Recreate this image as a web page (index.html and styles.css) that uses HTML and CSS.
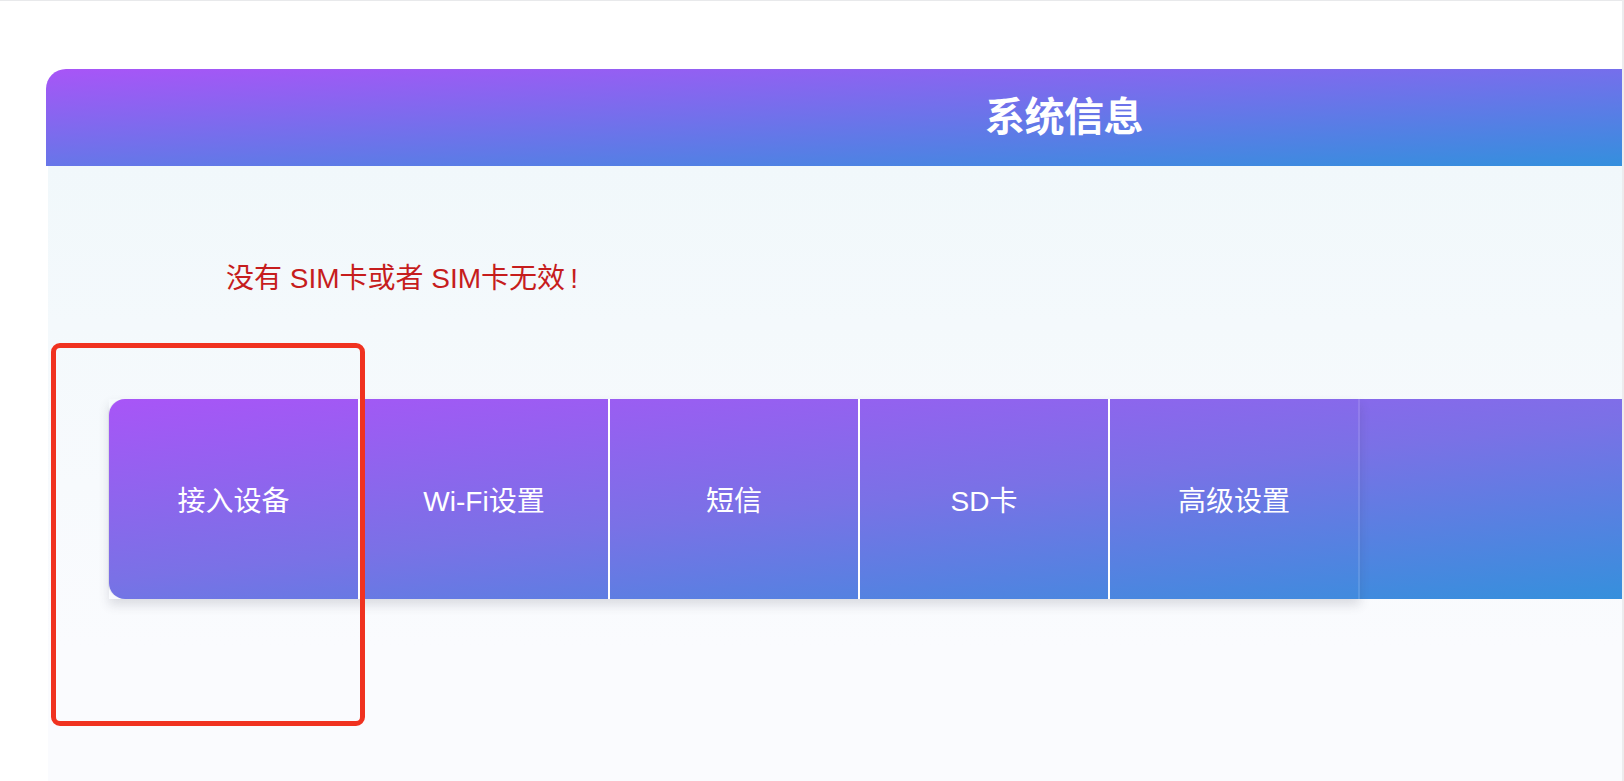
FILE: index.html
```html
<!DOCTYPE html>
<html lang="zh-CN">
<head>
<meta charset="utf-8">
<title>系统信息</title>
<link rel="stylesheet" href="styles.css">
</head>
<body>
  <div class="card">
    <div class="card-header">系统信息</div>
    <div class="card-body">
      <p class="warning">没有 SIM卡或者 SIM卡无效<span class="excl">!</span></p>
      <div class="nav">
        <ul class="tabs">
          <li class="tab">接入设备</li>
          <li class="tab">Wi-Fi设置</li>
          <li class="tab">短信</li>
          <li class="tab">SD卡</li>
          <li class="tab tab-last">高级设置</li>
        </ul>
      </div>
    </div>
  </div>
  <div class="highlight"></div>
</body>
</html>
```

FILE: styles.css
```css
html, body {
  margin: 0;
  padding: 0;
  overflow: hidden;
}
body {
  background: #ffffff;
  border-top: 1px solid #e8e9eb;
  font-family: "Liberation Sans", "Noto Sans CJK SC", sans-serif;
  width: 1624px;
  height: 780px;
  position: relative;
}
body::after {
  content: "";
  position: fixed;
  top: 0;
  right: 0;
  bottom: 0;
  width: 2px;
  background: #ececee;
}
.card {
  margin: 68px 0 0 46px;
  width: 2036px;
}
.card-header {
  height: 97px;
  line-height: 97px;
  border-radius: 20px 20px 0 0;
  background: linear-gradient(to bottom right, #a855f7, #2597da);
  color: #ffffff;
  text-align: center;
  font-size: 40px;
  font-weight: bold;
  letter-spacing: -0.5px;
}
.card-body {
  min-height: 640px;
  padding: 0 61px;
  margin-left: 2px;
  background: linear-gradient(to bottom, #f1f8fb, #fafbfe 75%);
}
.warning {
  margin: 0;
  padding: 92px 0 0 117px;
  font-size: 28px;
  line-height: 42px;
  color: #c61d1d;
}
.excl {
  margin-left: 5px;
}
.nav {
  margin-top: 99px;
  width: 1912px;
  height: 200px;
  border-radius: 16px 0 0 16px;
  background: linear-gradient(to bottom right, #a855f7 0%, #7a71e6 45%, #2597da 100%);
  box-shadow: -1px 0 0 rgba(230, 232, 238, 0.9);
}
.tabs {
  list-style: none;
  margin: 0;
  padding: 0;
  display: flex;
  width: 1251px;
  height: 200px;
  box-shadow: 0 6px 10px rgba(60, 60, 80, 0.16);
}
.tab {
  box-sizing: border-box;
  width: 250px;
  display: flex;
  align-items: center;
  justify-content: center;
  border-right: 2px solid #ffffff;
  color: #ffffff;
  font-size: 28px;
}
.tab:first-child {
  width: 251px;
}
.tab-last {
  border-right: 2px solid rgba(255, 255, 255, 0.12);
}
.highlight {
  position: absolute;
  left: 51px;
  top: 342px;
  width: 304px;
  height: 373px;
  border: 5px solid #f03220;
  border-radius: 9px;
}
```
